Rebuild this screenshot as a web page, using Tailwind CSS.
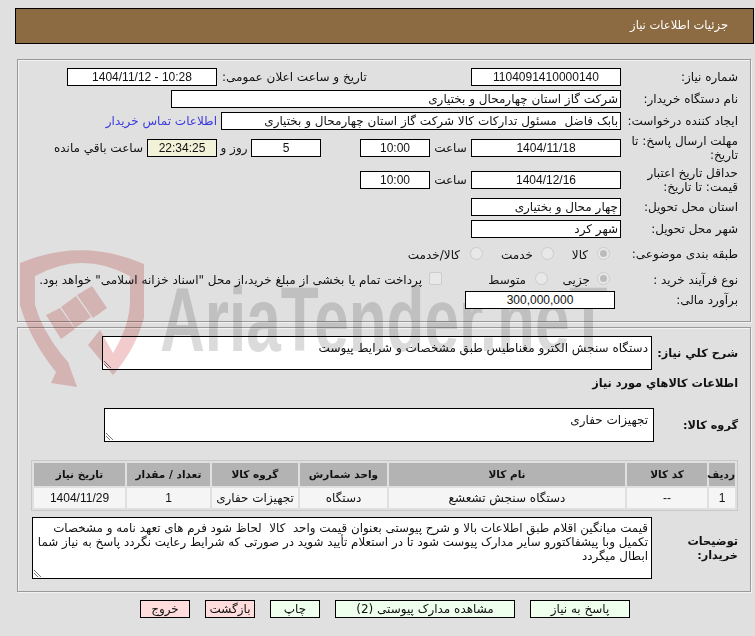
<!DOCTYPE html>
<html lang="fa" dir="rtl">
<head>
    <meta charset="UTF-8">
    <title>جزئیات اطلاعات نیاز</title>
    <script src="https://cdn.jsdelivr.net/npm/@tailwindcss/browser@4"></script>
</head>
<body class="bg-[#e0e0e0] h-[636px] overflow-hidden font-['DejaVu_Sans',sans-serif] text-[12px] text-[#111] relative">
    <!-- watermark -->
    <div class="absolute left-0 top-0 w-[755px] h-[400px] z-10 mix-blend-multiply pointer-events-none" dir="ltr">
        <svg class="absolute left-0 top-0 w-[755px] h-[400px]" viewBox="0 0 755 400">
            <path d="M20 263 Q82 237 144 264 L144 318 Q135 350 113 375 L88 345 L100 330 L113 353 Q130 325 130 300 L130 276 Q82 250 35 276 L35 305 Q42 330 62 355 L68 362 L77 387 L51 383 L56 372 Q30 340 20 305 Z" fill="#f2cccc"/>
            <path d="M46 315 L60 308 L75 329 L61 339 Z M61 307 L76 296 L91 317 L75 328 Z M77 295 L92 286 L107 308 L93 318 Z" fill="#f2cccc"/>
        </svg>
        <div class="absolute left-[160px] top-[275px] text-[90px] leading-[90px] font-bold text-[#dbdbdb] font-['Liberation_Sans',sans-serif] whitespace-nowrap origin-left scale-x-[0.69]">AriaTender.neT</div>
    </div>

    <div class="pt-2 pr-px pl-[15px]">
        <div class="h-9 bg-[#8c6b42] border border-black flex items-center pr-[25px] text-white text-[11.5px]">جزئیات اطلاعات نیاز</div>

        <!-- top panel -->
        <div class="mt-[15px] mr-[3px] ml-[2px] h-[263px] border border-[#999] shadow-[inset_1px_1px_0_#f2f2f2,1px_1px_0_#f2f2f2] pt-[6px] pr-[12px]">
            <div class="flex items-center h-[22px]">
                <div class="w-[117px] shrink-0">شماره نیاز:</div>
                <div class="w-[150px] h-[18px] bg-white border border-black text-center leading-[16px] font-['Liberation_Sans',sans-serif]">1104091410000140</div>
                <div class="w-[254px] text-left pl-[5px]">تاریخ و ساعت اعلان عمومی:</div>
                <div class="w-[150px] h-[18px] bg-white border border-black text-center leading-[16px] font-['Liberation_Sans',sans-serif]" dir="ltr">1404/11/12 - 10:28</div>
            </div>
            <div class="flex items-center h-[22px]">
                <div class="w-[117px] shrink-0">نام دستگاه خریدار:</div>
                <div class="w-[450px] h-[18px] bg-white border border-black pr-0.5 leading-[16px]">شرکت گاز استان چهارمحال و بختیاری</div>
            </div>
            <div class="flex items-center h-[22px]">
                <div class="w-[117px] shrink-0">ایجاد کننده درخواست:</div>
                <div class="w-[400px] h-[18px] bg-white border border-black pr-0.5 leading-[16px] whitespace-pre">بابک فاضل  مسئول تدارکات کالا شرکت گاز استان چهارمحال و بختیاری</div>
                <div class="mr-1 text-[#3a3ae0]">اطلاعات تماس خریدار</div>
            </div>
            <div class="flex items-center h-[32px]">
                <div class="w-[117px] shrink-0 leading-[14px]">مهلت ارسال پاسخ: تا تاریخ:</div>
                <div class="w-[150px] h-[18px] bg-white border border-black text-center leading-[16px] font-['Liberation_Sans',sans-serif]">1404/11/18</div>
                <div class="w-[41px] text-center">ساعت</div>
                <div class="w-[70px] h-[18px] bg-white border border-black text-center leading-[16px] font-['Liberation_Sans',sans-serif]">10:00</div>
                <div class="w-[39px]"></div>
                <div class="w-[70px] h-[18px] bg-white border border-black text-center leading-[16px] font-['Liberation_Sans',sans-serif]">5</div>
                <div class="w-[34px] text-center">روز و</div>
                <div class="w-[70px] h-[18px] bg-[#f2f2d8] border border-black text-center leading-[16px] font-['Liberation_Sans',sans-serif]">22:34:25</div>
                <div class="mr-1">ساعت باقي مانده</div>
            </div>
            <div class="flex items-center h-[32px]">
                <div class="w-[117px] shrink-0 leading-[14px]">حداقل تاریخ اعتبار قیمت: تا تاریخ:</div>
                <div class="w-[150px] h-[18px] bg-white border border-black text-center leading-[16px] font-['Liberation_Sans',sans-serif]">1404/12/16</div>
                <div class="w-[41px] text-center">ساعت</div>
                <div class="w-[70px] h-[18px] bg-white border border-black text-center leading-[16px] font-['Liberation_Sans',sans-serif]">10:00</div>
            </div>
            <div class="flex items-center h-[22px]">
                <div class="w-[117px] shrink-0">استان محل تحویل:</div>
                <div class="w-[150px] h-[18px] bg-white border border-black pr-0.5 leading-[16px]">چهار محال و بختیاری</div>
            </div>
            <div class="flex items-center h-[22px]">
                <div class="w-[117px] shrink-0">شهر محل تحویل:</div>
                <div class="w-[150px] h-[18px] bg-white border border-black pr-0.5 leading-[16px]">شهر کرد</div>
            </div>
            <div class="flex items-center h-[26px]">
                <div class="w-[128px] shrink-0 pt-[2px]">طبقه بندی موضوعی:</div>
                <span class="w-[13px] h-[13px] rounded-full border border-[#ccc] bg-[#e8e8e8] flex items-center justify-center"><span class="w-[7px] h-[7px] rounded-full bg-[#bbb]"></span></span>
                <span class="mr-[9px] w-[34px] pt-[3px]">کالا</span>
                <span class="w-[13px] h-[13px] rounded-full border border-[#ccc] bg-[#e8e8e8]"></span>
                <span class="mr-2 w-[50px] pt-[3px]">خدمت</span>
                <span class="w-[13px] h-[13px] rounded-full border border-[#ccc] bg-[#e8e8e8]"></span>
                <span class="mr-[10px] pt-[3px]">کالا/خدمت</span>
            </div>
            <div class="flex items-center h-[25px]">
                <div class="w-[128px] shrink-0 pt-[2px]">نوع فرآیند خرید :</div>
                <span class="w-[13px] h-[13px] rounded-full border border-[#ccc] bg-[#e8e8e8] flex items-center justify-center"><span class="w-[7px] h-[7px] rounded-full bg-[#bbb]"></span></span>
                <span class="mr-[7px] w-[42px] pt-[3px]">جزیی</span>
                <span class="w-[13px] h-[13px] rounded-full border border-[#ccc] bg-[#e8e8e8]"></span>
                <span class="mr-[9px] w-[84px] pt-[3px]">متوسط</span>
                <span class="w-[13px] h-[13px] rounded-[2px] border border-[#ccc] bg-[#e8e8e8] ml-[7px]"></span>
                <span class="whitespace-nowrap pt-[3px]">پرداخت تمام یا بخشی از مبلغ خرید،از محل "اسناد خزانه اسلامی" خواهد بود.</span>
            </div>
            <div class="flex items-center h-[18px]">
                <div class="w-[123px] shrink-0">برآورد مالی:</div>
                <div class="w-[150px] h-[18px] bg-white border border-black text-center leading-[16px] relative z-20 font-['Liberation_Sans',sans-serif]">300,000,000</div>
            </div>
        </div>

        <!-- description panel -->
        <div class="mt-[5px] mr-[3px] ml-[2px] h-[265px] border border-[#999] shadow-[inset_1px_1px_0_#f2f2f2,1px_1px_0_#f2f2f2] pt-[8px] pr-[12px]">
            <div class="flex items-center h-[34px]">
                <div class="w-[86px] shrink-0 font-bold text-[11.3px] pt-[2px]">شرح کلي نیاز:</div>
                <div class="relative w-[550px] h-[34px] bg-white border border-black pr-[3px] pt-px leading-[20px]">دستگاه سنجش الکترو مغناطیس طبق مشخصات و شرایط پیوست
                    <svg class="absolute left-0 bottom-0 w-[9px] h-[9px]" viewBox="0 0 9 9"><path d="M1 1 L8 8 M1 4 L5 8" stroke="#777" fill="none"/></svg>
                </div>
            </div>
            <div class="font-bold text-[11.3px] mt-[6px] h-[32px] leading-[16px]">اطلاعات کالاهاي مورد نیاز</div>
            <div class="flex items-center h-[34px]">
                <div class="w-[84px] shrink-0 font-bold text-[11.3px] pt-[2px]">گروه کالا:</div>
                <div class="relative w-[550px] h-[34px] bg-white border border-black pr-[5px] pt-px leading-[20px]">تجهیزات حفاری
                    <svg class="absolute left-0 bottom-0 w-[9px] h-[9px]" viewBox="0 0 9 9"><path d="M1 1 L8 8 M1 4 L5 8" stroke="#777" fill="none"/></svg>
                </div>
            </div>
            <table class="mt-[18px] w-[707px] table-fixed border-separate border-spacing-[2px] border border-[#c8c8c8] text-center">
                <thead>
                    <tr class="bg-[#b3b3b3] h-[23px] font-bold text-[10.5px]">
                        <th class="w-[26px] p-0">ردیف</th><th class="w-[80px] p-0">کد کالا</th><th class="w-[236px] p-0">نام کالا</th><th class="w-[87px] p-0">واحد شمارش</th><th class="w-[86px] p-0">گروه کالا</th><th class="w-[83px] p-0">تعداد / مقدار</th><th class="p-0">تاریخ نیاز</th>
                    </tr>
                </thead>
                <tbody>
                    <tr class="bg-[#f5f5f5] h-[20px]">
                        <td class="p-0 font-['Liberation_Sans',sans-serif]">1</td><td class="p-0 font-['Liberation_Sans',sans-serif]">--</td><td class="p-0">دستگاه سنجش تشعشع</td><td class="p-0">دستگاه</td><td class="p-0">تجهیزات حفاری</td><td class="p-0 font-['Liberation_Sans',sans-serif]">1</td><td class="p-0 font-['Liberation_Sans',sans-serif]">1404/11/29</td>
                    </tr>
                </tbody>
            </table>
            <div class="flex items-start mt-[6px]">
                <div class="w-[86px] shrink-0 font-bold text-[11.3px] pt-[18px] leading-[14px]">توضیحات خریدار:</div>
                <div class="relative w-[620px] h-[62px] bg-white border border-black pr-[3px] leading-[14px] pt-[3px] text-[11.9px] whitespace-pre">قیمت میانگین اقلام طبق اطلاعات بالا و شرح پیوستی بعنوان قیمت واحد  کالا  لحاظ شود فرم های تعهد نامه و مشخصات<br>تکمیل وبا پیشفاکتورو سایر مدارک پیوست شود تا در استعلام تأیید شوید در صورتی که شرایط رعایت نگردد پاسخ به نیاز شما<br>ابطال میگردد<svg class="absolute left-0 bottom-0 w-[9px] h-[9px]" viewBox="0 0 9 9"><path d="M1 1 L8 8 M1 4 L5 8" stroke="#777" fill="none"/></svg></div>
            </div>
        </div>

        <!-- buttons -->
        <div class="flex justify-start gap-[15px] mt-[8px] pr-[124px]">
            <div class="w-[100px] h-[18px] border border-black bg-[#eeffee] text-center leading-[16px]">پاسخ به نیاز</div>
            <div class="w-[180px] h-[18px] border border-black bg-[#eeffee] text-center leading-[16px]">مشاهده مدارک پیوستی (2)</div>
            <div class="w-[50px] h-[18px] border border-black bg-[#eeffee] text-center leading-[16px]">چاپ</div>
            <div class="w-[50px] h-[18px] border border-black bg-[#ffdddd] text-center leading-[16px]">بازگشت</div>
            <div class="w-[50px] h-[18px] border border-black bg-[#ffdddd] text-center leading-[16px]">خروج</div>
        </div>
    </div>
</body>
</html>
